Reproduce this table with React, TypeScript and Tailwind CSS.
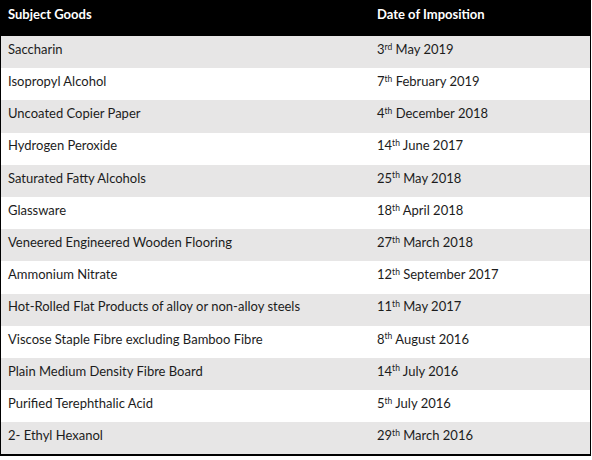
const rows: { goods: string; day: string; suffix: string; rest: string }[] = [
  { goods: 'Saccharin', day: '3', suffix: 'rd', rest: 'May 2019' },
  { goods: 'Isopropyl Alcohol', day: '7', suffix: 'th', rest: 'February 2019' },
  { goods: 'Uncoated Copier Paper', day: '4', suffix: 'th', rest: 'December 2018' },
  { goods: 'Hydrogen Peroxide', day: '14', suffix: 'th', rest: 'June 2017' },
  { goods: 'Saturated Fatty Alcohols', day: '25', suffix: 'th', rest: 'May 2018' },
  { goods: 'Glassware', day: '18', suffix: 'th', rest: 'April 2018' },
  { goods: 'Veneered Engineered Wooden Flooring', day: '27', suffix: 'th', rest: 'March 2018' },
  { goods: 'Ammonium Nitrate', day: '12', suffix: 'th', rest: 'September 2017' },
  { goods: 'Hot-Rolled Flat Products of alloy or non-alloy steels', day: '11', suffix: 'th', rest: 'May 2017' },
  { goods: 'Viscose Staple Fibre excluding Bamboo Fibre', day: '8', suffix: 'th', rest: 'August 2016' },
  { goods: 'Plain Medium Density Fibre Board', day: '14', suffix: 'th', rest: 'July 2016' },
  { goods: 'Purified Terephthalic Acid', day: '5', suffix: 'th', rest: 'July 2016' },
  { goods: '2- Ethyl Hexanol', day: '29', suffix: 'th', rest: 'March 2016' },
];

export default function App() {
  return (
    <div className="h-[460px] w-[592px] bg-white font-['Lato','Liberation_Sans',sans-serif] text-[13px] text-[#1c1c1c]">
      <div className="w-[591px] border-x border-b-2 border-black">
        {/* header */}
        <div className="flex h-[36px] items-center bg-black pb-[6px] font-bold text-white">
          <div className="w-[369px] pl-[7px]">Subject Goods</div>
          <div className="flex-1 pl-[7px]">Date of Imposition</div>
        </div>

        {rows.map((row, i) => (
          <div
            key={row.goods}
            className={`flex h-[32.2px] items-center pb-[5px] ${i % 2 === 0 ? 'bg-[#e7e6e6]' : 'bg-white'}`}
          >
            <div className="w-[369px] whitespace-nowrap pl-[7px]">{row.goods}</div>
            <div className="flex-1 whitespace-nowrap pl-[7px]">
              {row.day}
              <sup className="text-[8.5px]">{row.suffix}</sup> {row.rest}
            </div>
          </div>
        ))}
      </div>
    </div>
  );
}
